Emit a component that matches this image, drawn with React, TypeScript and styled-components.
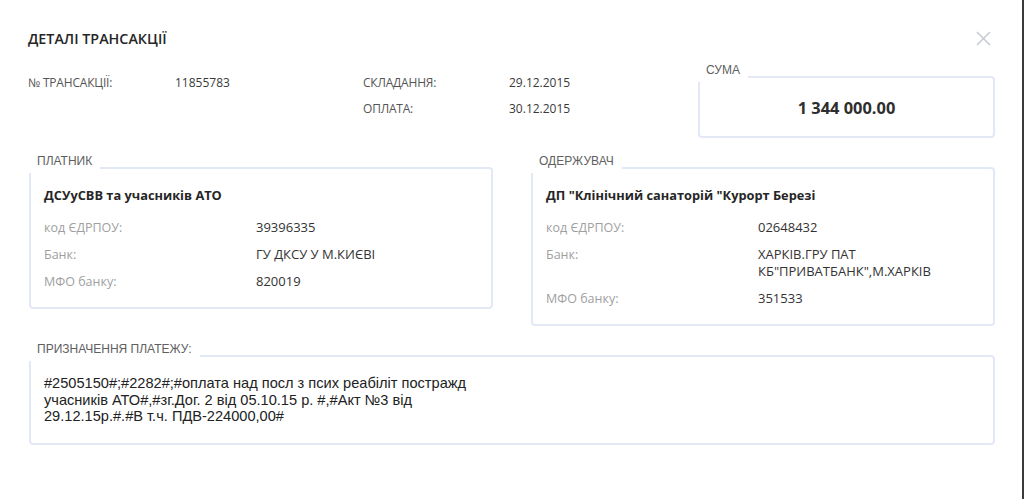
import React from "react";
import styled, { createGlobalStyle } from "styled-components";

const GlobalStyle = createGlobalStyle`
  html, body { margin: 0; padding: 0; background: #ffffff; }
  body { font-family: "Open Sans", "Liberation Sans", sans-serif; }
  * { box-sizing: border-box; }
`;

const Page = styled.div`
  width: 1024px;
  height: 499px;
  background: #ffffff;
  border-right: 2px solid #3a3a3a;
  padding: 26px 27px 0 28px;
  display: flex;
  flex-direction: column;
`;

const Header = styled.div`
  display: flex;
  align-items: center;
  justify-content: space-between;
  height: 24px;
  padding-right: 4px;
`;

const Title = styled.h1`
  margin: 0;
  font-family: "Open Sans", sans-serif;
  font-weight: 600;
  font-size: 14.3px;
  color: #262626;
`;

const CloseButton = styled.button`
  border: none;
  background: none;
  padding: 0;
  width: 16px;
  height: 16px;
  display: flex;
  align-items: center;
  justify-content: center;
  cursor: pointer;
`;

const TopSection = styled.div`
  display: flex;
  align-items: flex-start;
  margin-top: 24px;
`;

const InfoGrid = styled.div`
  display: grid;
  grid-template-columns: 147px 188px 146px 189px;
  row-gap: 9px;
  line-height: 17px;
`;

const InfoLabel = styled.div`
  font-family: "Open Sans", sans-serif;
  font-size: 12px;
  color: #555;
  letter-spacing: -0.2px;
`;

const InfoValue = styled.div`
  font-family: "Open Sans", sans-serif;
  font-size: 12px;
  color: #3a3a3a;
`;

const Box = styled.div`
  position: relative;
  border: 2px solid #e2e8f6;
  border-radius: 4px;
  background: #fff;
`;

const Legend = styled.div`
  position: absolute;
  top: -15px;
  left: -2px;
  height: 19px;
  padding: 0 8px;
  background: #fff;
  font-family: "Liberation Sans", Arial, sans-serif;
  font-size: 12px;
  line-height: 15px;
  color: #606060;
`;

const SumBox = styled(Box)`
  width: 297px;
  height: 62px;
  margin-top: 2px;
  display: flex;
  align-items: center;
  justify-content: center;
`;

const SumValue = styled.div`
  font-family: "Open Sans", sans-serif;
  font-weight: 700;
  font-size: 16.4px;
  color: #2e2e2e;
  padding-top: 1px;
`;

const PartiesRow = styled.div`
  display: grid;
  grid-template-columns: 1fr 1fr;
  column-gap: 38px;
  align-items: start;
  margin-top: 29px;
  padding-left: 1px;
`;

const PartyBody = styled.div`
  padding: 18px 13px 17px 13px;
`;

const PartyName = styled.div`
  font-family: "Open Sans", sans-serif;
  font-weight: 700;
  font-size: 12.8px;
  line-height: 17px;
  color: #262626;
  margin-bottom: 15px;
`;

const DetailGrid = styled.div`
  display: grid;
  grid-template-columns: 212px 1fr;
  row-gap: 10px;
  line-height: 17px;
`;

const DetailLabel = styled.div`
  font-family: "Open Sans", sans-serif;
  font-size: 12.5px;
  color: #a0a0a0;
`;

const DetailValue = styled.div`
  font-family: "Open Sans", sans-serif;
  font-size: 13px;
  color: #333;
`;

const PurposeBox = styled(Box)`
  margin-top: 29px;
  margin-left: 1px;
  padding: 18px 13px 18px 13px;
  min-height: 89px;
`;

const PurposeText = styled.div`
  font-family: "Liberation Sans", Arial, sans-serif;
  font-size: 14.6px;
  line-height: 16.5px;
  color: #222;
  max-width: 470px;
`;

type Detail = { label: string; value: React.ReactNode };

const Party: React.FC<{ legend: string; name: string; rows: Detail[] }> = ({
  legend,
  name,
  rows,
}) => (
  <Box>
    <Legend>{legend}</Legend>
    <PartyBody>
      <PartyName>{name}</PartyName>
      <DetailGrid>
        {rows.map((r) => (
          <React.Fragment key={r.label}>
            <DetailLabel>{r.label}</DetailLabel>
            <DetailValue>{r.value}</DetailValue>
          </React.Fragment>
        ))}
      </DetailGrid>
    </PartyBody>
  </Box>
);

export default function App() {
  return (
    <>
      <GlobalStyle />
      <Page>
        <Header>
          <Title>ДЕТАЛІ ТРАНСАКЦІЇ</Title>
          <CloseButton aria-label="close">
            <svg width="15" height="15" viewBox="0 0 15 15">
              <path
                d="M1 1 L14 14 M14 1 L1 14"
                stroke="#c5c9d1"
                strokeWidth="1.5"
                fill="none"
              />
            </svg>
          </CloseButton>
        </Header>

        <TopSection>
          <InfoGrid>
            <InfoLabel>№ ТРАНСАКЦІЇ:</InfoLabel>
            <InfoValue>11855783</InfoValue>
            <InfoLabel>СКЛАДАННЯ:</InfoLabel>
            <InfoValue>29.12.2015</InfoValue>
            <div />
            <div />
            <InfoLabel>ОПЛАТА:</InfoLabel>
            <InfoValue>30.12.2015</InfoValue>
          </InfoGrid>
          <SumBox>
            <Legend>СУМА</Legend>
            <SumValue>1 344 000.00</SumValue>
          </SumBox>
        </TopSection>

        <PartiesRow>
          <Party
            legend="ПЛАТНИК"
            name="ДСУуСВВ та учасників АТО"
            rows={[
              { label: "код ЄДРПОУ:", value: "39396335" },
              { label: "Банк:", value: "ГУ ДКСУ У М.КИЄВІ" },
              { label: "МФО банку:", value: "820019" },
            ]}
          />
          <Party
            legend="ОДЕРЖУВАЧ"
            name={'ДП "Клінічний санаторій "Курорт Березі'}
            rows={[
              { label: "код ЄДРПОУ:", value: "02648432" },
              {
                label: "Банк:",
                value: (
                  <>
                    ХАРКІВ.ГРУ ПАТ
                    <br />
                    {'КБ"ПРИВАТБАНК",М.ХАРКІВ'}
                  </>
                ),
              },
              { label: "МФО банку:", value: "351533" },
            ]}
          />
        </PartiesRow>

        <PurposeBox>
          <Legend>ПРИЗНАЧЕННЯ ПЛАТЕЖУ:</Legend>
          <PurposeText>
            #2505150#;#2282#;#оплата над посл з псих реабіліт постражд
            <br />
            учасників АТО#,#зг.Дог. 2 від 05.10.15 р. #,#Акт №3 від
            <br />
            29.12.15р.#.#В т.ч. ПДВ-224000,00#
          </PurposeText>
        </PurposeBox>
      </Page>
    </>
  );
}
